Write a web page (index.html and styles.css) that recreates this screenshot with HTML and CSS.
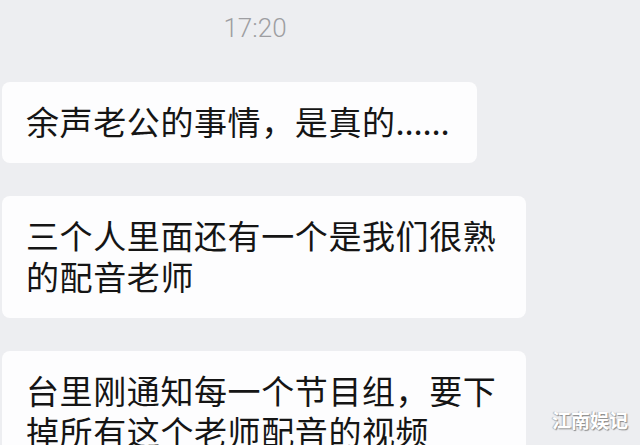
FILE: index.html
```html
<!DOCTYPE html>
<html lang="zh-CN">
  <head>
    <meta charset="UTF-8" />
    <title>聊天记录</title>
    <link rel="stylesheet" href="styles.css">
  </head>
  <body>
    <div class="chat">
      <div class="time">17:20</div>

      <div class="msg">
        <div class="bubble">余声老公的事情，是真的<span class="dots">......</span></div>
      </div>

      <div class="msg">
        <div class="bubble">三个人里面还有一个是我们很熟的配音老师</div>
      </div>

      <div class="msg">
        <div class="bubble">台里刚通知每一个节目组，要下掉所有这个老师配音的视频</div>
      </div>
    </div>

    <div class="mark">江南娱记</div>
  </body>
</html>
```

FILE: styles.css
```css
html, body {
  height: 445px;
  overflow: hidden;
}
body {
  margin: 0;
  background: #edeef1;
  font-family: "Noto Sans CJK SC", "Noto Sans", sans-serif;
  position: relative;
}
.chat {
  padding-top: 13px;
}
.time {
  width: 510px;
  text-align: center;
  font-family: Roboto, "Noto Sans", sans-serif;
  font-weight: 300;
  font-size: 26px;
  line-height: 31px;
  color: #9e9ea2;
  margin-bottom: 38px;
}
.msg {
  margin-bottom: 33px;
  padding-left: 2px;
}
.bubble {
  display: inline-block;
  max-width: 472px;
  background: #fdfdfe;
  border-radius: 8px;
  padding: 19px 28px 21px 24px;
  font-size: 33px;
  line-height: 41px;
  letter-spacing: 0.6px;
  color: #151515;
}
.dots {
  letter-spacing: -0.2px;
}
.mark {
  position: absolute;
  right: 12px;
  bottom: 12px;
  font-size: 19px;
  font-weight: bold;
  color: #fff;
  text-shadow: 1px 1px 1px #8a8a8a, -1px 0 1px #b0b0b0;
}
```
